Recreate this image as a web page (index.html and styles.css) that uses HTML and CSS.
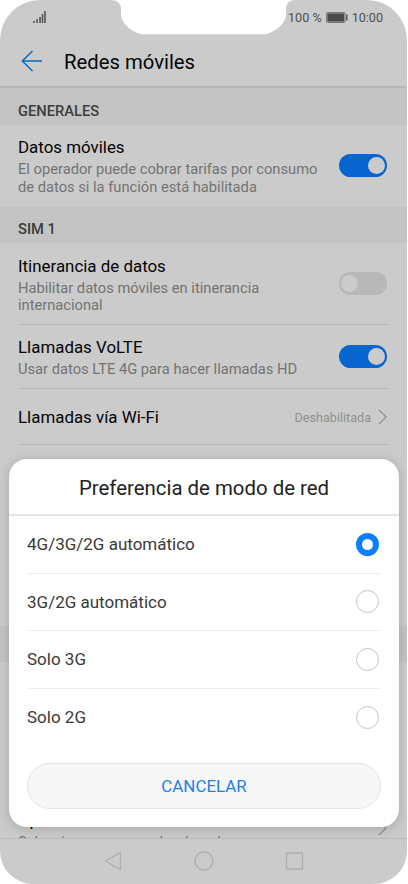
FILE: index.html
```
<!DOCTYPE html>
<html lang="es">
<head>
    <meta charset="UTF-8">
    <meta name="viewport" content="width=device-width, initial-scale=1.0">
    <title>Redes móviles</title>
    <link rel="stylesheet" href="styles.css">
</head>
<body>
    <div class="phone">
        <svg class="notch" width="184" height="35" viewBox="0 0 184 35">
            <path d="M0 0C7 0 10 4 10 9V14C10 23 19 31 30 34.300H155C166 31 175 23 175 14V9C175 4 178 0 184 0Z" fill="#fff"/>
        </svg>

        <div class="status-bar">
            <svg class="signal" width="13" height="12" viewBox="0 0 13 12">
                <path d="M1 12V10M4 12V8M7 12V6M9.500 12V3M12 12V0" stroke="#555" stroke-width="1.600" fill="none"/>
            </svg>
            <div class="status-right">
                <span class="percent">100 %</span>
                <svg width="22" height="11" viewBox="0 0 22 11">
                    <rect x="0.500" y="0.500" width="18.500" height="10" rx="1" fill="#aaa" stroke="#777"/>
                    <rect x="1.500" y="1.500" width="16.500" height="8" fill="#4a4a4a"/>
                    <rect x="20" y="2.500" width="1.500" height="6" fill="#555"/>
                </svg>
                <span>10:00</span>
            </div>
        </div>

        <div class="header">
            <svg width="22" height="22" viewBox="0 0 22 22">
                <path d="M11.500 1L1.300 11L11.500 21M1.300 11H21" stroke="#1265c4" stroke-width="1.500" fill="none"/>
            </svg>
            <h1>Redes móviles</h1>
        </div>

        <div class="content">
            <h2 class="section section-first">GENERALES</h2>
            <div class="row row-data">
                <div class="text">
                    <div class="title">Datos móviles</div>
                    <div class="desc">El operador puede cobrar tarifas por consumo<br>de datos si la función está habilitada</div>
                </div>
                <div class="switch on"></div>
            </div>

            <h2 class="section">SIM 1</h2>
            <div class="row row-roaming line">
                <div class="text">
                    <div class="title">Itinerancia de datos</div>
                    <div class="desc">Habilitar datos móviles en itinerancia<br>internacional</div>
                </div>
                <div class="switch"></div>
            </div>
            <div class="row row-volte line">
                <div class="text">
                    <div class="title">Llamadas VoLTE</div>
                    <div class="desc">Usar datos LTE 4G para hacer llamadas HD</div>
                </div>
                <div class="switch on"></div>
            </div>
            <div class="row row-wifi line">
                <div class="title">Llamadas vía Wi-Fi</div>
                <div class="value">
                    Deshabilitada
                    <svg width="9" height="16" viewBox="0 0 9 16">
                        <path d="M1 1L8 8L1 15" stroke="#949494" stroke-width="1.400" fill="none"/>
                    </svg>
                </div>
            </div>

            <div class="section section-sim2"></div>
            <div class="row row-operator">
                <div class="text">
                    <div class="title">Operador</div>
                    <div class="desc">Seleccionar un operador de red</div>
                </div>
                <svg width="9" height="16" viewBox="0 0 9 16">
                    <path d="M1 1L8 8L1 15" stroke="#949494" stroke-width="1.400" fill="none"/>
                </svg>
            </div>
        </div>

        <div class="nav">
            <svg width="20" height="20" viewBox="0 0 20 20">
                <path d="M17.500 1.500V18.500L2.500 10Z"/>
            </svg>
            <svg width="20" height="20" viewBox="0 0 20 20">
                <circle cx="10" cy="10" r="9"/>
            </svg>
            <svg width="20" height="20" viewBox="0 0 20 20">
                <rect x="1.500" y="2" width="16" height="16" rx="0.500"/>
            </svg>
        </div>

        <div class="dialog">
            <div class="dialog-title">Preferencia de modo de red</div>
            <div class="options">
                <div class="option">4G/3G/2G automático <span class="radio checked"></span></div>
                <div class="option">3G/2G automático <span class="radio"></span></div>
                <div class="option">Solo 3G <span class="radio"></span></div>
                <div class="option">Solo 2G <span class="radio"></span></div>
            </div>
            <button class="cancel">CANCELAR</button>
        </div>
    </div>
</body>
</html>
```
FILE: styles.css
```
* {
    box-sizing: border-box;
}

body {
    margin: 0;
    background-color: #fff;
    font-family: Roboto, sans-serif;
    color: #050505;
}

svg {
    display: block;
    flex-shrink: 0;
}

.phone {
    position: relative;
    display: flex;
    flex-direction: column;
    width: 407px;
    height: 884px;
    background-color: #cbcbcb;
    border-radius: 40px 40px 33px 33px;
    overflow: hidden;
}

.notch {
    position: absolute;
    left: 111px;
    top: 0;
}

.status-bar {
    display: flex;
    justify-content: space-between;
    align-items: center;
    height: 35px;
    padding: 0 24px 0 33px;
    font-size: 12.600px;
    color: #505050;
}

.signal {
    margin-bottom: 1px;
}

.status-right {
    display: flex;
    align-items: center;
    gap: 4px;
}

.header {
    display: flex;
    align-items: center;
    gap: 21px;
    height: 53px;
    padding: 1px 21px 0;
    border-bottom: 2px solid #b7b7b7;
}

h1 {
    margin: 0;
    padding-top: 1px;
    font-size: 20.300px;
    font-weight: 400;
}

.content {
    height: 750px;
    overflow: hidden;
}

.section {
    display: flex;
    align-items: center;
    height: 36px;
    margin: 0;
    padding: 8px 18px 0;
    background-color: #c3c3c3;
    font-size: 14.700px;
    font-weight: 500;
    color: #3c3c3c;
}

.section-first {
    height: 37px;
}

.section-sim2 {
    margin-top: 181px;
}

.row {
    display: flex;
    justify-content: space-between;
    align-items: center;
    margin: 0 18px;
    padding-right: 2px;
}

.line {
    border-bottom: 1px solid #b9b9b9;
}

.row-data {
    height: 82px;
}

.row-roaming {
    height: 82px;
}

.row-volte {
    height: 64px;
}

.row-roaming .text,
.row-volte .text {
    padding-top: 2px;
}

.row-wifi {
    height: 56px;
    padding-top: 1px;
}

.row-operator {
    height: 60px;
    margin-top: 136px;
}

.row-operator .text {
    padding-top: 4px;
}

.title {
    font-size: 16.900px;
    line-height: 23px;
}

.desc {
    padding-top: 2px;
    font-size: 14.700px;
    line-height: 17.500px;
    color: #737373;
    white-space: nowrap;
}

.value {
    display: flex;
    align-items: center;
    gap: 7px;
    font-size: 12.600px;
    color: #919191;
}

.switch {
    display: flex;
    flex-shrink: 0;
    align-items: center;
    width: 48px;
    height: 23px;
    padding: 0 2px;
    border-radius: 12px;
    background-color: #b8b8b8;
}

.row-data .switch {
    margin-bottom: 1px;
}

.switch::before {
    content: "";
    width: 17px;
    height: 17px;
    border-radius: 50%;
    background-color: #cbcbcb;
}

.switch.on {
    justify-content: flex-end;
    background-color: #0665cf;
}

.nav {
    display: flex;
    justify-content: center;
    align-items: center;
    gap: 71px;
    height: 46px;
    padding-bottom: 2px;
    border-top: 1px solid #bababa;
}

.nav svg {
    fill: none;
    stroke: #b0b0b0;
    stroke-width: 1.400;
}

.dialog {
    position: absolute;
    left: 9px;
    top: 459px;
    width: 390px;
    height: 368px;
    background-color: #fff;
    border-radius: 18px;
    box-shadow: 0 2px 12px rgba(0,0,0,0.18);
}

.dialog-title {
    height: 57px;
    border-bottom: 2px solid #e6e6e6;
    font-size: 20.400px;
    line-height: 58px;
    text-align: center;
    color: #222;
}

.options {
    padding: 0 18px;
}

.option {
    display: flex;
    justify-content: space-between;
    align-items: center;
    height: 57.500px;
    padding-right: 2px;
    border-bottom: 1px solid #ededed;
    font-size: 17px;
    color: #3a3a3a;
}

.option:last-child {
    height: 57px;
    border-bottom: none;
}

.radio {
    width: 23px;
    height: 23px;
    border: 1px solid #c4c4c4;
    border-radius: 50%;
}

.radio.checked {
    border: 6px solid #0a80ff;
}

.cancel {
    display: block;
    width: 354px;
    height: 46px;
    margin: 17.400px auto 0;
    padding: 0;
    border: 1px solid #e4e4e4;
    border-radius: 23px;
    background-color: #f7f7f7;
    font-family: inherit;
    font-size: 16.900px;
    color: #1a82e8;
}
```
